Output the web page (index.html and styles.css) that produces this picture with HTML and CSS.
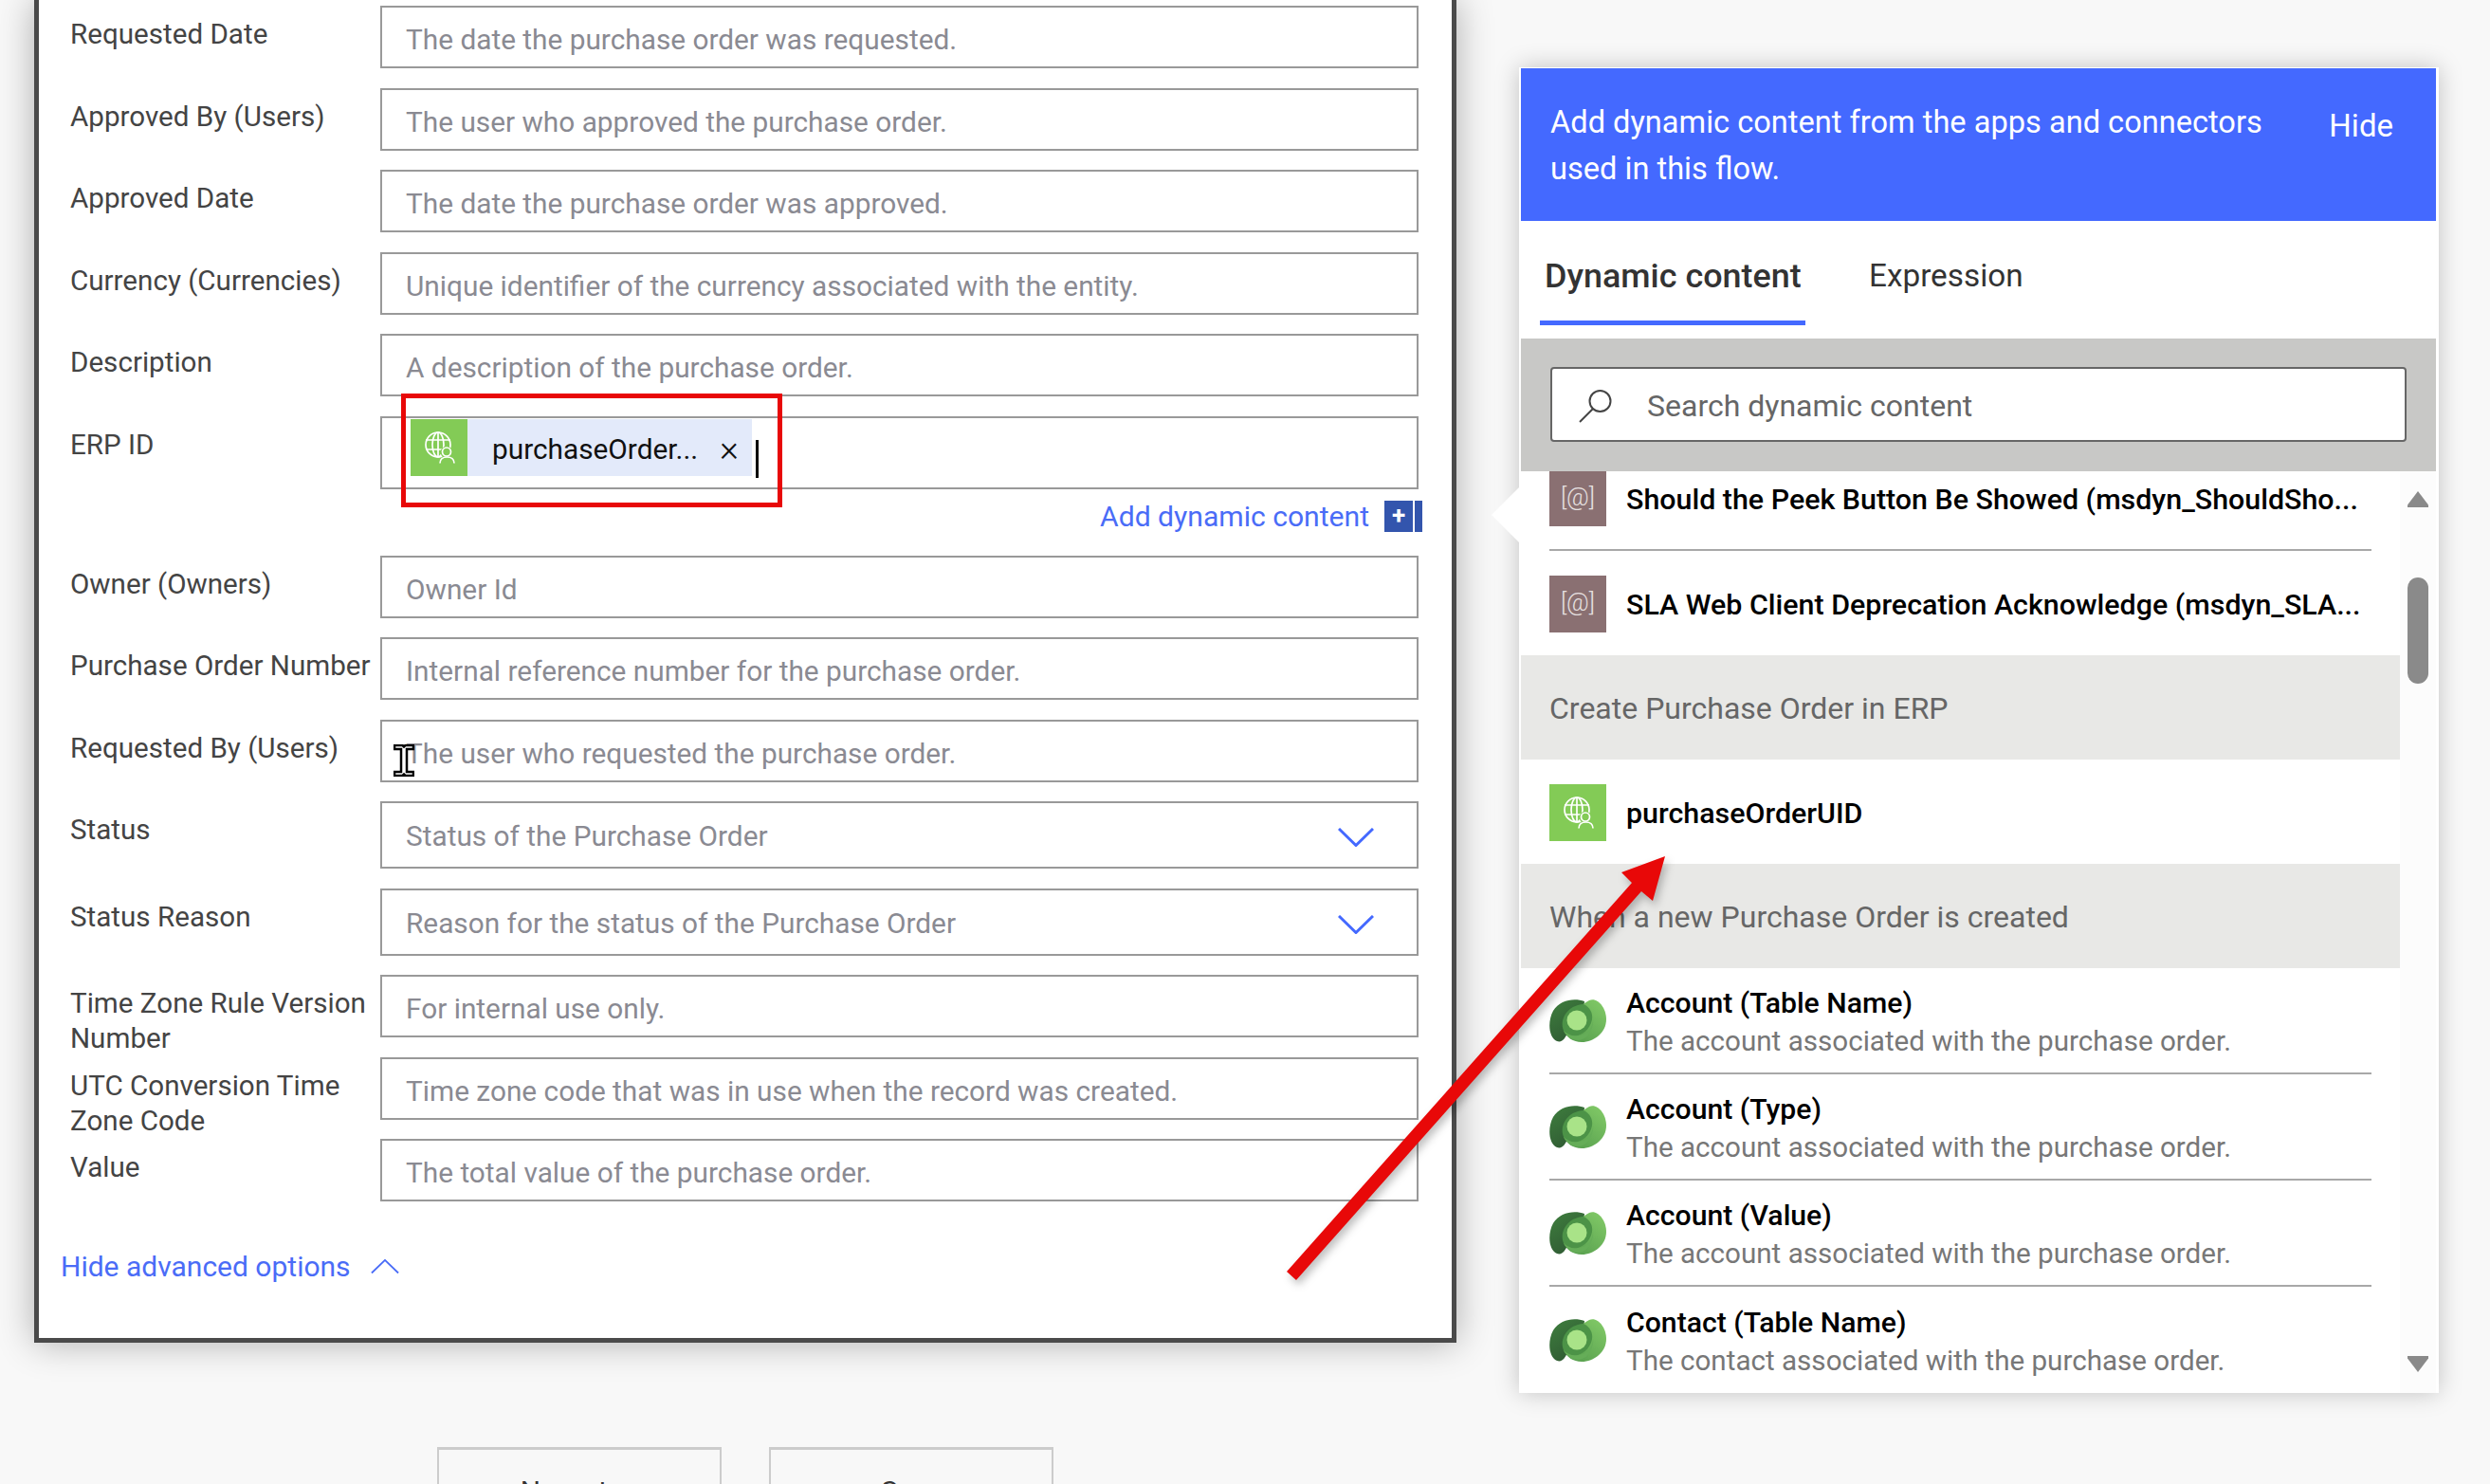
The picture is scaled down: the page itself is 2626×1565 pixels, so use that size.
FILE: index.html
```html
<!DOCTYPE html>
<html lang="en">
<head>
    <meta charset="UTF-8">
    <meta name="viewport" content="width=device-width, initial-scale=1.0">
    <title>Create a new record</title>
    <link rel="stylesheet" href="styles.css">
</head>
<body>
    <svg class="icon-defs" aria-hidden="true">
        <defs>
            <linearGradient id="dv-dark" x1="0" y1="0" x2="0.6" y2="1">
                <stop offset="0" stop-color="#3f7f3e"/>
                <stop offset="1" stop-color="#2f5a33"/>
            </linearGradient>
            <linearGradient id="dv-light" x1="1" y1="0" x2="0.2" y2="1">
                <stop offset="0" stop-color="#84cc68"/>
                <stop offset="1" stop-color="#569e4e"/>
            </linearGradient>
            <symbol id="globe-user" viewBox="0 0 60 60">
                <g fill="none" stroke="#fff" stroke-width="1.7">
                    <circle cx="29" cy="27" r="13"/>
                    <ellipse cx="29" cy="27" rx="6" ry="13"/>
                    <path d="M16 22H42M16 32H42M29 14V40"/>
                    <circle cx="38" cy="35" r="6.5" fill="#83cb56" stroke="none"/>
                    <path d="M28 50C28 43 33 41 38.500 41S48 43 48 50H28Z" fill="#83cb56" stroke="none"/>
                    <circle cx="38" cy="34.500" r="4.500"/>
                    <path d="M31 46.500C31 42.500 34 40 38.500 40S46 42.500 46 46.500"/>
                </g>
            </symbol>
            <symbol id="dataverse" viewBox="0 0 60 46">
                <path d="M37 3C27 -1 11 1 4 13C-2 24 -1 41 8 45C14 47 17 41 20 35L36 14Z" fill="url(#dv-dark)"/>
                <path d="M42 2C50 -2 60 9 60 22C60 36 47 46 34 46C25 46 18 41 15 34L30 10C34 7 38 4 42 2Z" fill="url(#dv-light)"/>
                <path d="M15 34C10 22 19 7 36 6C43 9 46 16 45 22C43 33 34 39 26 40C21 40 17 38 15 34Z" fill="#4c9347"/>
                <path d="M30 39C40 39 46 30 46 22C47 32 40 44 30 44C24 44 19 41 15 34C19 38 24 40 30 39Z" fill="#65ad58"/>
                <circle cx="29" cy="23" r="10.500" fill="#a9e388"/>
            </symbol>
        </defs>
    </svg>

    <div class="page">
        <div class="left-col">
            <div class="card">
                <div class="form">
                    <div class="row">
                        <label class="row-label">Requested Date</label>
                        <div class="field">The date the purchase order was requested.</div>
                    </div>
                    <div class="row">
                        <label class="row-label">Approved By (Users)</label>
                        <div class="field">The user who approved the purchase order.</div>
                    </div>
                    <div class="row">
                        <label class="row-label">Approved Date</label>
                        <div class="field">The date the purchase order was approved.</div>
                    </div>
                    <div class="row">
                        <label class="row-label">Currency (Currencies)</label>
                        <div class="field">Unique identifier of the currency associated with the entity.</div>
                    </div>
                    <div class="row">
                        <label class="row-label">Description</label>
                        <div class="field">A description of the purchase order.</div>
                    </div>
                    <div class="row">
                        <label class="row-label">ERP ID</label>
                        <div class="field-wrap">
                            <div class="field field-token">
                                <span class="token">
                                    <span class="token-icon"><svg class="globe-svg"><use href="#globe-user"/></svg></span>
                                    <span class="token-text">purchaseOrder...</span>
                                    <span class="token-x">&times;</span>
                                </span>
                                <span class="caret"></span>
                            </div>
                            <div class="add-row">
                                <a class="add-link">Add dynamic content</a>
                                <span class="add-btn"><span class="add-plus">+</span><span class="add-tail"></span></span>
                            </div>
                        </div>
                    </div>
                    <div class="row">
                        <label class="row-label">Owner (Owners)</label>
                        <div class="field">Owner Id</div>
                    </div>
                    <div class="row">
                        <label class="row-label">Purchase Order Number</label>
                        <div class="field">Internal reference number for the purchase order.</div>
                    </div>
                    <div class="row">
                        <label class="row-label">Requested By (Users)</label>
                        <div class="field">The user who requested the purchase order.</div>
                    </div>
                    <div class="row row-select">
                        <label class="row-label">Status</label>
                        <div class="field field-select">Status of the Purchase Order
                            <svg class="chevron" viewBox="0 0 38 20"><path d="M1 1L19 18.500L37 1"/></svg>
                        </div>
                    </div>
                    <div class="row row-select">
                        <label class="row-label">Status Reason</label>
                        <div class="field field-select">Reason for the status of the Purchase Order
                            <svg class="chevron" viewBox="0 0 38 20"><path d="M1 1L19 18.500L37 1"/></svg>
                        </div>
                    </div>
                    <div class="row">
                        <label class="row-label">Time Zone Rule Version Number</label>
                        <div class="field">For internal use only.</div>
                    </div>
                    <div class="row">
                        <label class="row-label">UTC Conversion Time Zone Code</label>
                        <div class="field">Time zone code that was in use when the record was created.</div>
                    </div>
                    <div class="row">
                        <label class="row-label">Value</label>
                        <div class="field">The total value of the purchase order.</div>
                    </div>
                </div>
                <a class="advanced">Hide advanced options
                    <svg class="advanced-chevron" viewBox="0 0 32 16"><path d="M1 15.500L16 1L31 15.500"/></svg>
                </a>
            </div>
            <div class="actions">
                <button class="action-btn">New step</button>
                <button class="action-btn">Save</button>
            </div>
        </div>

        <aside class="panel">
            <div class="panel-head">
                <p class="panel-title">Add dynamic content from the apps and connectors used in this flow.</p>
                <a class="panel-hide">Hide</a>
            </div>
            <div class="tabs">
                <div class="tab tab-active">Dynamic content</div>
                <div class="tab tab-expr">Expression</div>
            </div>
            <div class="search-band">
                <div class="search-box">
                    <svg class="search-icon" viewBox="0 0 36 36"><circle cx="22.500" cy="13" r="11"/><path d="M15 21L1 35"/></svg>
                    <span>Search dynamic content</span>
                </div>
            </div>
            <div class="list-wrap">
                <div class="list">
                    <div class="item item-first">
                        <span class="var-icon">[@]</span>
                        <span class="item-name">Should the Peek Button Be Showed (msdyn_ShouldSho...</span>
                    </div>
                    <div class="item item-plain">
                        <span class="var-icon">[@]</span>
                        <span class="item-name">SLA Web Client Deprecation Acknowledge (msdyn_SLA...</span>
                    </div>
                    <div class="group">Create Purchase Order in ERP</div>
                    <div class="item item-plain">
                        <span class="http-icon"><svg class="globe-svg"><use href="#globe-user"/></svg></span>
                        <span class="item-name">purchaseOrderUID</span>
                    </div>
                    <div class="group">When a new Purchase Order is created</div>
                    <div class="item item-desc">
                        <svg class="dv-icon"><use href="#dataverse"/></svg>
                        <div>
                            <div class="item-name">Account (Table Name)</div>
                            <div class="item-sub">The account associated with the purchase order.</div>
                        </div>
                    </div>
                    <div class="item item-desc">
                        <svg class="dv-icon"><use href="#dataverse"/></svg>
                        <div>
                            <div class="item-name">Account (Type)</div>
                            <div class="item-sub">The account associated with the purchase order.</div>
                        </div>
                    </div>
                    <div class="item item-desc">
                        <svg class="dv-icon"><use href="#dataverse"/></svg>
                        <div>
                            <div class="item-name">Account (Value)</div>
                            <div class="item-sub">The account associated with the purchase order.</div>
                        </div>
                    </div>
                    <div class="item item-desc item-last">
                        <svg class="dv-icon"><use href="#dataverse"/></svg>
                        <div>
                            <div class="item-name">Contact (Table Name)</div>
                            <div class="item-sub">The contact associated with the purchase order.</div>
                        </div>
                    </div>
                </div>
                <div class="scroll">
                    <span class="scroll-up"></span>
                    <span class="scroll-thumb"></span>
                    <span class="scroll-down"></span>
                </div>
            </div>
        </aside>
    </div>

    <!-- callout pointer, annotations and mouse cursor sit over the page -->
    <div class="pointer"></div>
    <div class="red-box"></div>
    <svg class="ibeam" viewBox="0 0 22 34"><path d="M1 1H9.500L11 2.500L12.500 1H21V5H14V29H21V33H12.500L11 31.500L9.500 33H1V29H8V5H1Z"/></svg>
    <svg class="red-arrow" viewBox="0 0 2626 1565">
        <polygon points="1357,1341 1721,931 1710,920 1756,903 1743,950 1731,940 1367,1350"/>
    </svg>
</body>
</html>
```

FILE: styles.css
```css
* {
    box-sizing: border-box;
}
html, body {
    margin: 0;
    height: 100%;
}
body {
    position: relative;
    width: 2626px;
    height: 1565px;
    overflow: hidden;
    background-color: #f8f8f8;
    font-family: Roboto, "Noto Sans", sans-serif;
    font-size: 29.8px;
    color: #444;
}
.icon-defs {
    position: absolute;
    width: 0;
    height: 0;
}
.page {
    display: flex;
    padding-left: 36px;
}
.left-col {
    width: 1500px;
    flex: none;
}
.card {
    height: 1416px;
    padding: 6px 35px 0 33px;
    background-color: #fff;
    border: 5px solid #4a4a4a;
    border-top: none;
    box-shadow: 0 0 36px rgba(0,0,0,0.3);
}
.form {
    display: flex;
    flex-direction: column;
    gap: 20.5px;
}
.row {
    display: grid;
    grid-template-columns: 327px 1095px;
}
.row-label {
    height: 66px;
    padding-top: 12px;
    padding-right: 4px;
    line-height: 37px;
    font-size: 29.6px;
    color: #444;
}
.field {
    height: 66px;
    padding: 5px 24px 0 25px;
    display: flex;
    align-items: center;
    border: 2.5px solid #999;
    color: #8a8a92;
    background-color: #fff;
}
.row-select .field {
    height: 71px;
    padding-top: 2px;
}
.field-select {
    justify-content: space-between;
    padding-right: 45px;
}
.chevron {
    width: 38px;
    height: 20px;
    margin-top: 3px;
}
.chevron path {
    fill: none;
    stroke: #4469ff;
    stroke-width: 3;
}
.field-token {
    height: 77px;
    padding: 1px 0 0 30px;
    align-items: flex-start;
}
.token {
    display: flex;
    align-items: center;
    width: 360px;
    height: 60px;
    background-color: #e3eafa;
    color: #111;
}
.token-icon {
    flex: none;
    width: 60px;
    height: 60px;
    background-color: #83cb56;
}
.globe-svg {
    display: block;
    width: 60px;
    height: 60px;
}
.token-text {
    margin-left: 26px;
    padding-top: 3px;
    width: 217px;
    white-space: nowrap;
}
.token-x {
    margin-left: 23px;
    padding-top: 3px;
    font-size: 38px;
    font-weight: 300;
    line-height: 1;
}
.caret {
    width: 3px;
    height: 40px;
    margin: 22px 0 0 4px;
    background-color: #000;
}
.add-row {
    display: flex;
    justify-content: flex-end;
    align-items: center;
    height: 33px;
    margin: 12px -4px 4.5px 0;
}
.add-link, .advanced {
    color: #4a6cf7;
}
.add-link {
    font-size: 30.1px;
}
.add-btn {
    display: flex;
    height: 33px;
    margin-left: 16px;
}
.add-plus {
    width: 30px;
    text-align: center;
    font-size: 26px;
    font-weight: 700;
    line-height: 31px;
    color: #fff;
    background-color: #3355ad;
}
.add-tail {
    width: 8px;
    margin-left: 2px;
    background-color: #3355ad;
}
.advanced {
    display: flex;
    align-items: center;
    gap: 21px;
    margin: 51px 0 0 -10px;
    font-size: 30px;
}
.advanced-chevron {
    width: 30px;
    height: 15px;
}
.advanced-chevron path {
    fill: none;
    stroke: #4a6cf7;
    stroke-width: 2;
}
.actions {
    display: flex;
    gap: 50px;
    margin: 110px 0 0 425px;
}
.action-btn {
    width: 300px;
    height: 92px;
    padding: 0;
    align-self: flex-start;
    font: inherit;
    color: #333;
    background-color: #f8f8f8;
    border: 2px solid #ccc;
    border-top-width: 3px;
    text-align: center;
}
.panel {
    width: 970px;
    height: 1398px;
    margin: 71px 0 0 66px;
    padding: 1px 3px 0 2px;
    flex: none;
    background-color: #fff;
    box-shadow: 0 0 24px rgba(0,0,0,0.22);
}
.panel-head {
    display: flex;
    justify-content: space-between;
    height: 161px;
    padding: 33px 45px 0 31px;
    background-color: #4469ff;
    color: #fff;
    font-size: 32.6px;
}
.panel-title {
    margin: 0;
    width: 790px;
    line-height: 49px;
}
.panel-hide {
    padding-top: 3px;
    line-height: 49px;
    font-size: 33px;
}
.tabs {
    display: flex;
    gap: 60px;
    height: 124px;
    padding: 0 0 0 20px;
    color: #333;
}
.tab {
    padding: 32px 5px 0;
    height: 110px;
    line-height: 52px;
    white-space: nowrap;
}
.tab-expr {
    padding-left: 7px;
    font-size: 33.3px;
}
.tab-active {
    width: 280px;
    font-size: 35.9px;
    font-weight: 500;
    border-bottom: 5px solid #4469ff;
}
.search-band {
    height: 140px;
    padding: 30px 31px 0 31px;
    background-color: #c8c8c6;
}
.search-box {
    display: flex;
    align-items: center;
    height: 79px;
    padding-left: 28px;
    gap: 36px;
    border: 2.5px solid #666;
    border-radius: 4px;
    background-color: #fff;
    color: #666;
    font-size: 32px;
}
.search-box span {
    padding-top: 2px;
}
.search-icon {
    width: 36px;
    height: 36px;
    margin-top: 3px;
}
.search-icon circle, .search-icon path {
    fill: none;
    stroke: #444;
    stroke-width: 2;
}
.list-wrap {
    display: flex;
    height: 972px;
    overflow: hidden;
}
.list {
    width: 927px;
    flex: none;
}
.item {
    display: flex;
    margin: 0 30px;
    font-size: 30.4px;
    color: #000;
}
.item-name {
    font-weight: 500;
    color: #000;
    white-space: nowrap;
}
.item-first {
    height: 84px;
    gap: 21px;
    border-bottom: 2.5px solid #a8a8a8;
}
.item-first .item-name {
    line-height: 60px;
}
.item-plain {
    align-items: center;
    height: 110px;
    padding-top: 1px;
    gap: 21px;
}
.item-plain .item-name {
    padding-top: 2px;
}
.item-first .var-icon {
    height: 58px;
    line-height: 54px;
}
.var-icon {
    flex: none;
    width: 60px;
    height: 60px;
    text-align: center;
    line-height: 56px;
    font-size: 26px;
    font-weight: 300;
    color: #e6e0e0;
    background-color: #8a7072;
}
.http-icon {
    flex: none;
    width: 60px;
    height: 60px;
    background-color: #83cb56;
}
.group {
    height: 110px;
    padding: 1px 0 0 30px;
    line-height: 110px;
    font-size: 32px;
    color: #666;
    background-color: #e8e8e6;
}
.item-desc {
    align-items: center;
    height: 112px;
    gap: 21px;
    border-bottom: 2.5px solid #a8a8a8;
}
.item-last {
    border-bottom: none;
}
.item-desc .item-name {
    margin-top: 3px;
    line-height: 40px;
    font-size: 30.2px;
}
.dv-icon {
    flex: none;
    width: 60px;
    height: 46px;
}
.item-sub {
    line-height: 40px;
    font-size: 29.6px;
    color: #777;
}
.scroll {
    position: relative;
    flex: 1;
    background-color: #fcfcfc;
}
.scroll-up, .scroll-down, .scroll-thumb {
    position: absolute;
    left: 8px;
    width: 22px;
}
.scroll-thumb {
    top: 112px;
    height: 112px;
    border-radius: 11px;
    background-color: #8a8a8a;
}
.scroll-up {
    top: 21px;
    height: 17px;
    background-color: #8a8a8a;
    clip-path: polygon(50% 0, 100% 85%, 100% 100%, 0 100%, 0 85%);
}
.scroll-down {
    top: 933px;
    height: 17px;
    background-color: #8a8a8a;
    clip-path: polygon(0 0, 100% 0, 100% 15%, 50% 100%, 0 15%);
}
.pointer {
    position: absolute;
    left: 1573px;
    top: 513px;
    width: 30px;
    height: 60px;
    background-color: #fff;
    clip-path: polygon(100% 0, 100% 100%, 0 50%);
}
.red-box {
    position: absolute;
    left: 423px;
    top: 415px;
    width: 402px;
    height: 120px;
    border: 5px solid #e80808;
}
.ibeam {
    position: absolute;
    left: 415px;
    top: 785px;
    width: 22px;
    height: 34px;
}
.ibeam path {
    fill: #fff;
    stroke: #000;
    stroke-width: 2.5;
}
.red-arrow {
    position: absolute;
    left: 0;
    top: 0;
    width: 2626px;
    height: 1565px;
    pointer-events: none;
}
.red-arrow polygon {
    fill: #e80808;
    filter: drop-shadow(3px 5px 4px rgba(0,0,0,0.25));
}
```
